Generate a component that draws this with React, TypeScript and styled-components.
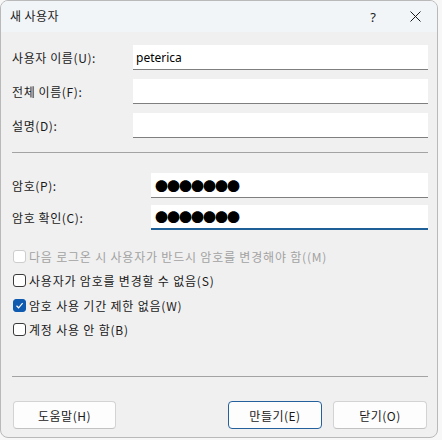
import React from "react";
import styled, { createGlobalStyle, css } from "styled-components";

const Global = createGlobalStyle`
  html, body { margin: 0; padding: 0; background: #f7f7f7; }
  body { font-family: "Noto Sans CJK KR", "Noto Sans", sans-serif; font-size: 12px; color: #1a1a1a; }
  * { box-sizing: border-box; }
`;

const Window = styled.div`
  width: 438px;
  height: 438px;
  border: 1px solid #b9b9b9;
  border-radius: 8px;
  background: #f0f0f0;
  overflow: hidden;
  display: flex;
  flex-direction: column;
`;

const TitleBar = styled.div`
  height: 31px;
  flex: none;
  display: flex;
  align-items: center;
  padding-left: 9px;
  background: #f2f5f8;
`;

const Title = styled.div`
  flex: 1;
  font-size: 12px;
  letter-spacing: 0.4px;
  color: #1a1a1a;
  line-height: 1;
  padding-bottom: 2px;
`;

const TitleButton = styled.div<{ $w: number }>`
  width: ${(p) => p.$w}px;
  height: 31px;
  display: flex;
  align-items: center;
  justify-content: center;
  font-family: "Noto Sans", sans-serif;
  font-size: 13px;
  color: #1a1a1a;
`;

const Body = styled.div`
  flex: 1;
  display: flex;
  flex-direction: column;
  padding: 13px 9px 0 11px;
`;

const FieldGrid = styled.div<{ $label: number; $gap: number; $top?: number }>`
  display: grid;
  grid-template-columns: ${(p) => p.$label}px 1fr;
  grid-auto-rows: 25px;
  row-gap: ${(p) => p.$gap}px;
  align-items: center;
  margin-top: ${(p) => p.$top ?? 0}px;
`;

const Label = styled.label`
  font-size: 12px;
  letter-spacing: 0.6px;
  color: #1a1a1a;
  padding-bottom: 1px;
`;

const Input = styled.div<{ $active?: boolean }>`
  height: 25px;
  background: #ffffff;
  border-bottom: 1px solid #7f7f7f;
  display: flex;
  align-items: center;
  padding-left: 3px;
  font-family: "Noto Sans", sans-serif;
  font-size: 12px;
  color: #000;
  ${(p) =>
    p.$active &&
    css`
      border-bottom: 2px solid #1d5f96;
    `}
`;

const Dots = styled.span`
  font-family: "Noto Sans CJK KR", sans-serif;
  font-size: 13px;
  letter-spacing: -1px;
  color: #000;
  padding-left: 1px;
  line-height: 1;
`;

const Separator = styled.div<{ $top: number }>`
  height: 1px;
  background: #a3a3a3;
  margin-top: ${(p) => p.$top}px;
`;

const CheckList = styled.div`
  display: flex;
  flex-direction: column;
  margin-top: 14px;
`;

const CheckRow = styled.div<{ $disabled?: boolean }>`
  height: 24.5px;
  display: flex;
  align-items: center;
  gap: 3px;
  font-size: 12px;
  letter-spacing: 0.8px;
  color: ${(p) => (p.$disabled ? "#a2a2a2" : "#1a1a1a")};
`;

const Box = styled.span<{ $checked?: boolean; $disabled?: boolean }>`
  width: 13px;
  height: 13px;
  margin-left: 1px;
  border-radius: 3px;
  flex: none;
  display: flex;
  align-items: center;
  justify-content: center;
  background: ${(p) => (p.$checked ? "#0f5bb0" : "#ffffff")};
  border: 1px solid
    ${(p) => (p.$checked ? "#0f5bb0" : p.$disabled ? "#cdcdcd" : "#3a3a3a")};
`;

const ButtonRow = styled.div`
  margin-top: 24px;
  display: flex;
  justify-content: space-between;
  padding-left: 1px;
  padding-right: 1px;
`;

const ButtonGroup = styled.div`
  display: flex;
  gap: 11px;
`;

const Button = styled.div<{ $w: number; $default?: boolean }>`
  width: ${(p) => p.$w}px;
  height: 28px;
  border-radius: 4px;
  background: #fdfdfd;
  border: 1px solid ${(p) => (p.$default ? "#24609c" : "#d3d3d3")};
  border-bottom-color: ${(p) => (p.$default ? "#24609c" : "#c2c2c2")};
  display: flex;
  align-items: center;
  justify-content: center;
  font-size: 12px;
  letter-spacing: 0.5px;
  color: #1a1a1a;
`;

const Check = () => (
  <svg width="9" height="9" viewBox="0 0 9 9">
    <path d="M1.5 4.8 L3.6 6.8 L7.6 2.2" fill="none" stroke="#fff" strokeWidth="1.2" />
  </svg>
);

const CloseIcon = () => (
  <svg width="11" height="11" viewBox="0 0 11 11">
    <path d="M0.5 0.5 L10.5 10.5 M10.5 0.5 L0.5 10.5" stroke="#1a1a1a" strokeWidth="1" />
  </svg>
);

const checks = [
  { text: "다음 로그온 시 사용자가 반드시 암호를 변경해야 함((M)", disabled: true },
  { text: "사용자가 암호를 변경할 수 없음(S)" },
  { text: "암호 사용 기간 제한 없음(W)", checked: true },
  { text: "계정 사용 안 함(B)" },
];

export default function App() {
  return (
    <>
      <Global />
      <Window>
        <TitleBar>
          <Title>새 사용자</Title>
          <TitleButton $w={40}>?</TitleButton>
          <TitleButton $w={44}>
            <CloseIcon />
          </TitleButton>
        </TitleBar>
        <Body>
          <FieldGrid $label={121} $gap={9}>
            <Label>사용자 이름(U):</Label>
            <Input>peterica</Input>
            <Label>전체 이름(F):</Label>
            <Input />
            <Label>설명(D):</Label>
            <Input />
          </FieldGrid>
          <Separator $top={14} />
          <FieldGrid $label={139} $gap={7} $top={20}>
            <Label>암호(P):</Label>
            <Input>
              <Dots>●●●●●●●</Dots>
            </Input>
            <Label>암호 확인(C):</Label>
            <Input $active>
              <Dots>●●●●●●●</Dots>
            </Input>
          </FieldGrid>
          <CheckList>
            {checks.map((c) => (
              <CheckRow key={c.text} $disabled={c.disabled}>
                <Box $checked={c.checked} $disabled={c.disabled}>
                  {c.checked && <Check />}
                </Box>
                {c.text}
              </CheckRow>
            ))}
          </CheckList>
          <Separator $top={34} />
          <ButtonRow>
            <Button $w={103}>도움말(H)</Button>
            <ButtonGroup>
              <Button $w={94} $default>
                만들기(E)
              </Button>
              <Button $w={94}>닫기(O)</Button>
            </ButtonGroup>
          </ButtonRow>
        </Body>
      </Window>
    </>
  );
}
